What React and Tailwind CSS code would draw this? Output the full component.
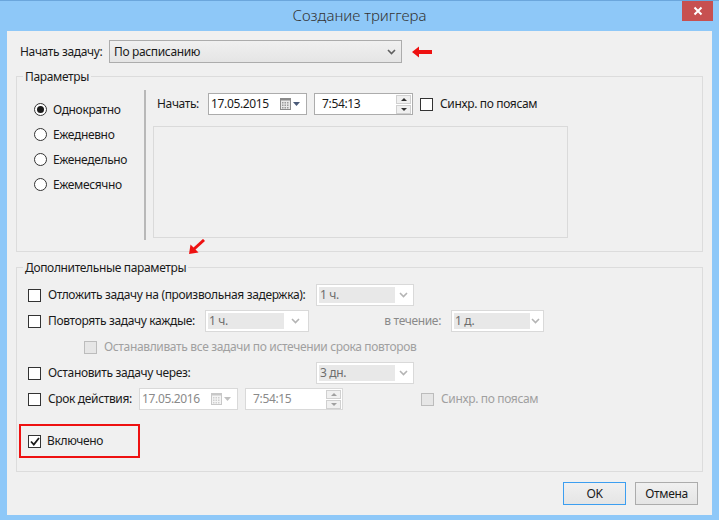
import React from "react";

const Chevron = ({ color = "#a8a8a8" }) => (
  <svg width="9" height="6" viewBox="0 0 9 6">
    <path d="M1 1 L4.5 4.5 L8 1" fill="none" stroke={color} strokeWidth="1.6" />
  </svg>
);

const Check = ({ checked, disabled }) => (
  <span
    className={`w-[13px] h-[13px] shrink-0 border flex items-center justify-center ${
      disabled ? "border-[#bcbcbc] bg-[#e6e6e6]" : "border-[#333333] bg-white"
    }`}
  >
    {checked && (
      <svg width="10" height="9" viewBox="0 0 10 9">
        <path d="M1 4.5 L3.8 7.5 L9 1" fill="none" stroke="#1a1a1a" strokeWidth="1.8" />
      </svg>
    )}
  </span>
);

const Radio = ({ checked, label }) => (
  <div className="flex items-center h-[25px]">
    <span className="w-[13px] h-[13px] shrink-0 rounded-full border border-[#333333] bg-white flex items-center justify-center">
      {checked && <span className="w-[7px] h-[7px] rounded-full bg-[#1a1a1a]" />}
    </span>
    <span className="ml-[6px] whitespace-nowrap">{label}</span>
  </div>
);

const Combo = ({ value, w }) => (
  <div className={`${w} shrink-0 h-[22px] border border-[#d9d9d9] bg-white flex items-center p-[2px]`}>
    <div className="w-[76px] h-full bg-[#e8e8e8] flex items-center pl-[1px] text-[#6d6d6d]">{value}</div>
    <div className="flex-1 flex justify-center">
      <Chevron color="#b4b4b4" />
    </div>
  </div>
);

const Spinner = ({ disabled }) => {
  const c = disabled ? "#a0a0a0" : "#303030";
  return (
    <div className="flex flex-col gap-[1px] mr-[1px]">
      {["M1 4 L4 1 L7 4 Z", "M1 1 L4 4 L7 1 Z"].map((d, i) => (
        <div key={i} className="w-[15px] h-[9px] border border-[#d0d0d0] bg-[#f0f0f0] flex items-center justify-center">
          <svg width="8" height="5" viewBox="0 0 8 5">
            <path d={d} fill={c} />
          </svg>
        </div>
      ))}
    </div>
  );
};

const CalIcon = ({ disabled }) => (
  <div className="flex items-center gap-[2px] mr-[6px]">
    <svg width="11" height="12" viewBox="0 0 11 12">
      <rect x="0.5" y="0.5" width="10" height="11" fill={disabled ? "#f4f4f4" : "#e8e8e8"} stroke={disabled ? "#c8c8c8" : "#8a8a8a"} />
      <rect x="0.5" y="0.5" width="10" height="2" fill={disabled ? "#c8c8c8" : "#8a8a8a"} />
      {[2, 4.5, 7].map((x) =>
        [4, 6.5, 9].map((y) => (
          <rect key={x + "-" + y} x={x} y={y} width="1.5" height="1.5" fill={disabled ? "#cfcfcf" : "#9a9a9a"} />
        ))
      )}
    </svg>
    <svg width="7" height="4" viewBox="0 0 7 4">
      <path d="M0 0 L7 0 L3.5 4 Z" fill={disabled ? "#c0c0c0" : "#4a5a78"} />
    </svg>
  </div>
);

export default function App() {
  return (
    <div className="w-[719px] h-[520px] bg-[#8ec8f8] border-t border-[#6ba6dc] flex flex-col font-['Noto_Sans',sans-serif] text-[12px] tracking-[-0.35px] whitespace-nowrap text-[#1a1a1a] overflow-hidden">
      {/* title bar */}
      <div className="relative h-[30px] flex items-center justify-center">
        <span className="text-[15px] text-[#333333] font-light tracking-normal -mt-[2px]">Создание триггера</span>
        <div className="absolute right-[6px] top-0 w-[31px] h-[20px] bg-[#c75050] flex items-center justify-center">
          <svg width="10" height="10" viewBox="0 0 10 10">
            <path d="M1.5 1.5 L8.5 8.5 M8.5 1.5 L1.5 8.5" stroke="#ffffff" strokeWidth="2" />
          </svg>
        </div>
      </div>

      {/* body */}
      <div className="relative mx-[7px] w-[705px] h-[484px] bg-[#f0f0f0] flex flex-col">
        {/* start task */}
        <div className="flex items-center mt-[9px] pl-[13px]">
          <span className="w-[89px]">Начать задачу:</span>
          <div className="w-[293px] h-[23px] border border-[#acacac] bg-gradient-to-b from-[#f0f0f0] to-[#e5e5e5] flex items-center justify-between pl-[4px] pr-[5px]">
            <span>По расписанию</span>
            <Chevron color="#606060" />
          </div>
          <svg className="ml-[10px]" width="20" height="12" viewBox="0 0 20 12">
            <path d="M0 6 L7 0.5 L7 4 L20 4 L20 8 L7 8 L7 11.5 Z" fill="#ee1111" />
          </svg>
        </div>

        {/* Параметры */}
        <div className="relative ml-[9px] mt-[13px] w-[687px] h-[176px] border border-[#dcdcdc] flex">
          <span className="absolute -top-[9px] left-[6px] px-[2px] bg-[#f0f0f0]">Параметры</span>
          <div className="w-[127px] pl-[17px] pt-[20px] flex flex-col">
            <Radio checked label="Однократно" />
            <Radio label="Ежедневно" />
            <Radio label="Еженедельно" />
            <Radio label="Ежемесячно" />
          </div>
          <div className="mt-[13px] h-[150px] border-l-2 border-[#b8b8b8] flex flex-col">
            <div className="flex items-center mt-[3px] pl-[11px]">
              <span className="w-[51px]">Начать:</span>
              <div className="w-[99px] h-[22px] border border-[#acacac] bg-white flex items-center justify-between pl-[2px]">
                <span>17.05.2015</span>
                <CalIcon />
              </div>
              <div className="ml-[7px] w-[99px] h-[22px] border border-[#acacac] bg-white flex items-center justify-between pl-[7px]">
                <span>7:54:13</span>
                <Spinner />
              </div>
              <div className="ml-[7px] flex items-center">
                <Check />
                <span className="ml-[7px]">Синхр. по поясам</span>
              </div>
            </div>
            <div className="ml-[7px] mt-[11px] w-[415px] h-[112px] border border-[#dadada] bg-[#f0f0f0]" />
          </div>
        </div>

        {/* red arrow */}
        <svg className="absolute left-[181px] top-[208px]" width="18" height="16" viewBox="0 0 18 16">
          <path d="M16 1 L6 10" stroke="#ee1111" strokeWidth="3" />
          <path d="M1 15 L2.5 5.5 L10.5 13.5 Z" fill="#ee1111" />
        </svg>

        {/* Дополнительные параметры */}
        <div className="relative ml-[9px] mt-[15px] w-[687px] h-[205px] border border-[#dcdcdc] flex flex-col pl-[11px] pt-[14px]">
          <span className="absolute -top-[9px] left-[6px] px-[2px] bg-[#f0f0f0]">Дополнительные параметры</span>

          <div className="h-[26px] flex items-center">
            <Check />
            <span className="ml-[7px] w-[268px] shrink-0">Отложить задачу на (произвольная задержка):</span>
            <Combo value="1 ч." w="w-[98px]" />
          </div>

          <div className="h-[26px] flex items-center">
            <Check />
            <span className="ml-[7px] w-[157px] shrink-0">Повторять задачу каждые:</span>
            <Combo value="1 ч." w="w-[104px]" />
            <span className="w-[142px] shrink-0 text-right pr-[10px] text-[#8a8a8a]">в течение:</span>
            <Combo value="1 д." w="w-[93px]" />
          </div>

          <div className="h-[26px] flex items-center pl-[56px]">
            <Check disabled />
            <span className="ml-[7px] text-[#a0a0a0]">Останавливать все задачи по истечении срока повторов</span>
          </div>

          <div className="h-[26px] flex items-center">
            <Check />
            <span className="ml-[7px] w-[268px] shrink-0">Остановить задачу через:</span>
            <Combo value="3 дн." w="w-[98px]" />
          </div>

          <div className="h-[26px] flex items-center">
            <Check />
            <span className="ml-[7px] w-[91px] shrink-0">Срок действия:</span>
            <div className="w-[99px] shrink-0 h-[22px] border border-[#d9d9d9] bg-white flex items-center justify-between pl-[2px] text-[#8a8a8a]">
              <span>17.05.2016</span>
              <CalIcon disabled />
            </div>
            <div className="ml-[7px] w-[98px] shrink-0 h-[22px] border border-[#d9d9d9] bg-white flex items-center justify-between pl-[7px] text-[#8a8a8a]">
              <span>7:54:15</span>
              <Spinner disabled />
            </div>
            <div className="ml-[78px] flex items-center">
              <Check disabled />
              <span className="ml-[7px] text-[#a0a0a0]">Синхр. по поясам</span>
            </div>
          </div>

          <div className="-ml-[9px] mt-[12px] w-[121px] h-[34px] border-2 border-[#ee1111] flex items-center pl-[7px]">
            <Check checked />
            <span className="ml-[6px]">Включено</span>
          </div>
        </div>

        {/* buttons */}
        <div className="flex justify-end gap-[9px] mt-[10px] pr-[14px]">
          <button className="w-[63px] h-[23px] border border-[#3c9ef0] bg-gradient-to-b from-[#f0f0f0] to-[#e5e5e5]">OK</button>
          <button className="w-[63px] h-[23px] border border-[#acacac] bg-gradient-to-b from-[#f0f0f0] to-[#e5e5e5]">Отмена</button>
        </div>
      </div>
    </div>
  );
}
